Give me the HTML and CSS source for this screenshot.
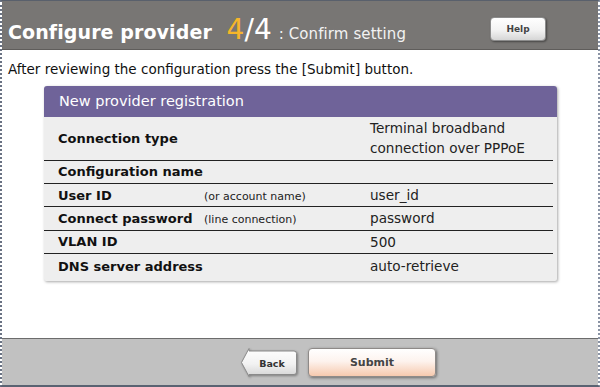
FILE: index.html
```html
<!DOCTYPE html>
<html>
<head>
<meta charset="utf-8">
<link rel="stylesheet" href="styles.css">
</head>
<body>
<div class="frame">
  <header class="head">
    <h1 class="title">Configure provider <span class="step"><span class="cur">4</span>/4</span> <span class="sub">: Confirm setting</span></h1>
    <button class="help">Help</button>
  </header>
  <main class="main">
    <p class="intro">After reviewing the configuration press the [Submit] button.</p>
    <section class="panel">
      <div class="panel-head">New provider registration</div>
      <div class="rows">
        <div class="row tall"><div class="lbl"><b>Connection type</b></div><div class="val">Terminal broadband<br>connection over PPPoE</div></div>
        <div class="row"><div class="lbl"><b>Configuration name</b></div><div class="val"></div></div>
        <div class="row"><div class="lbl"><b class="w1">User ID</b><span class="note">(or account name)</span></div><div class="val">user_id</div></div>
        <div class="row"><div class="lbl"><b class="w1">Connect password</b><span class="note">(line connection)</span></div><div class="val">password</div></div>
        <div class="row"><div class="lbl"><b>VLAN ID</b></div><div class="val">500</div></div>
        <div class="row last"><div class="lbl"><b>DNS server address</b></div><div class="val">auto-retrieve</div></div>
      </div>
    </section>
  </main>
  <footer class="foot">
    <button class="back">
      <svg class="back-shape" width="58" height="31" viewBox="0 0 58 31">
        <defs>
          <linearGradient id="bg" x1="0" y1="0" x2="0" y2="1">
            <stop offset="0" stop-color="#ffffff"/>
            <stop offset="0.55" stop-color="#f2f2f2"/>
            <stop offset="1" stop-color="#d4d4d4"/>
          </linearGradient>
        </defs>
        <path d="M1.5 15.5 L9 1.5 L9 4 L54 4 Q56.5 4 56.5 6.5 L56.5 25 Q56.5 27.5 54 27.5 L9 27.5 L9 29.5 Z" fill="url(#bg)" stroke="#8a8a8a" stroke-width="1"/>
      </svg>
      <span class="back-txt">Back</span>
    </button>
    <button class="submit">Submit</button>
  </footer>
</div>
</body>
</html>
```
FILE: styles.css
```css
html, body { margin: 0; padding: 0; background: #fff; }
body { font-family: "DejaVu Sans", Verdana, sans-serif; color: #111; }
.frame {
  width: 600px; height: 387px; box-sizing: border-box;
  border-left: 2px dotted #6a7384; border-right: 2px dotted #8a93a4;
  border-top: 1px solid #59606c; border-bottom: 2px solid #5a6372;
  display: flex; flex-direction: column;
}
.head {
  height: 48px; background: #787674; border-bottom: 1px solid #5f5d5b;
  display: flex; align-items: center; justify-content: space-between;
  padding: 0 52px 0 6px; flex: none;
}
.title { margin: 0; font-size: 19px; font-weight: bold; color: #fff; white-space: nowrap; letter-spacing: 0.1px; padding-top: 8px; }
.step { font-weight: normal; font-size: 28px; margin-left: 8px; }
.cur { color: #f5b62a; }
.sub { font-weight: normal; font-size: 15px; color: #f2f2f2; margin-left: 0; }
.help {
  width: 56px; height: 24px; border: 1px solid #8c8c8c; border-radius: 4px;
  background: linear-gradient(#ffffff, #f3f3f3 55%, #d6d6d6);
  box-shadow: 1px 1px 2px rgba(0,0,0,0.4);
  font: bold 9px "DejaVu Sans", sans-serif; color: #444; padding: 0; margin-top: 8px;
}
.main { flex: 1; padding: 0 0 0 6px; }
.intro { margin: 11px 0 0; font-size: 13.5px; color: #111; }
.panel {
  width: 513px; margin: 9px 0 0 36px; background: #eeeeee;
  border-radius: 3px 3px 2px 2px; box-shadow: 1px 1px 3px rgba(0,0,0,0.35);
  overflow: hidden;
}
.panel-head { background: #6f6399; color: #fff; font-size: 14.5px; height: 31px; line-height: 31px; padding-left: 15px; }
.rows { padding: 0 4px 3px 0; }
.row { display: flex; border-bottom: 1px solid #222; height: 22.4px; align-items: center; font-size: 13px; }
.row.tall { height: 42.5px; }
.row.last { border-bottom: 0; height: 24px; }
.lbl { width: 313px; padding-left: 14px; box-sizing: border-box; display: flex; align-items: baseline; }
.lbl b { font-size: 13px; }
.w1 { width: 146px; flex: none; }
.note { font-size: 11px; color: #222; }
.val { font-size: 13.6px; line-height: 20px; color: #222; padding-left: 13px; }
.foot {
  height: 46px; flex: none; background: #c1c1c1; border-top: 1px solid #6c6c6c;
  display: flex; align-items: center; justify-content: center; gap: 10px; padding: 0 0 0 76px;
}
.back { position: relative; width: 58px; height: 31px; border: 0; background: none; padding: 0; margin-left: 0; }
.back-shape { position: absolute; left: 0; top: 0; filter: drop-shadow(1px 1px 1px rgba(0,0,0,0.35)); }
.back-txt { position: relative; font: bold 9.5px "DejaVu Sans", sans-serif; color: #333; left: 3px; }
.submit {
  width: 128px; height: 29px; border: 1px solid #8e8a88; border-radius: 4px;
  background: linear-gradient(#ffffff, #fdf3ee 45%, #f6c9ae);
  box-shadow: 1px 1px 3px rgba(0,0,0,0.45);
  font: bold 11px "DejaVu Sans", sans-serif; color: #444; padding: 0;
}
```
